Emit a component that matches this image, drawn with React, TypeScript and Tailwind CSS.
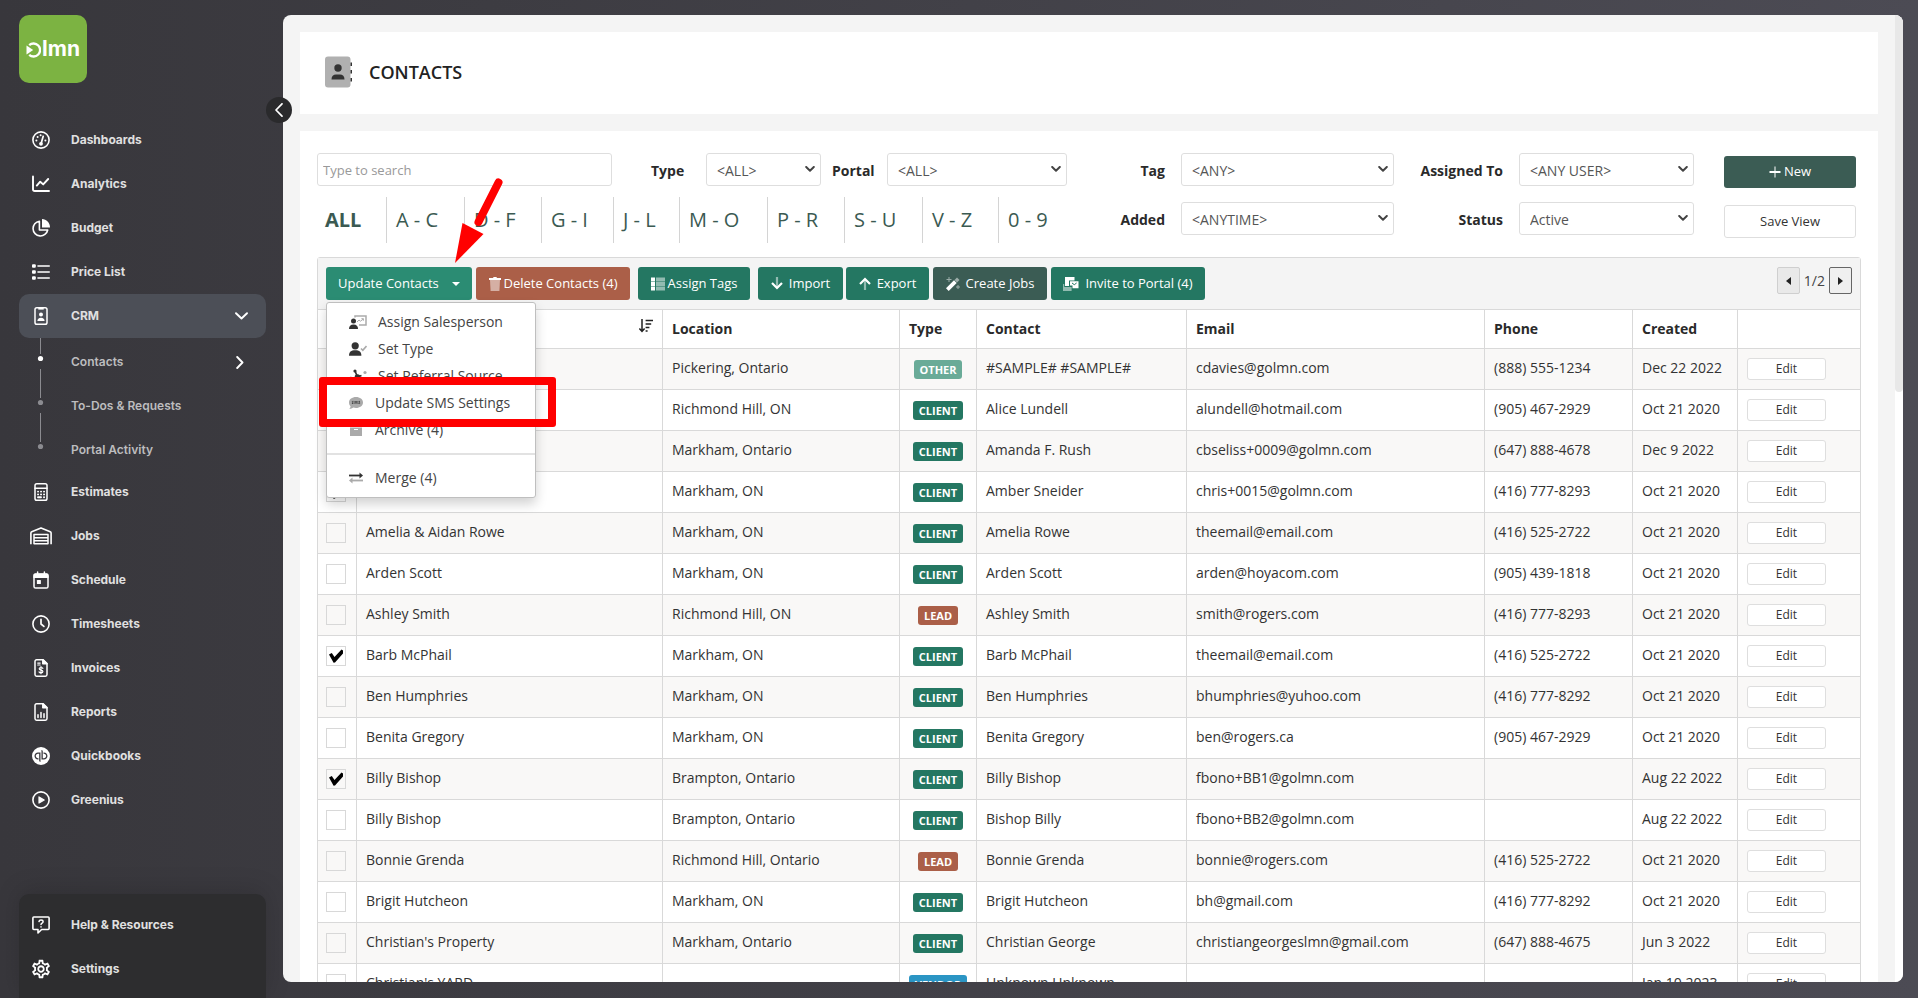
import React from "react";
import { SiQuickbooks } from "react-icons/si";
import { MdOutlineSettings } from "react-icons/md";

type IconProps = { children: React.ReactNode; className?: string; box?: string };

function Icon({ children, className = "size-[18px]", box = "0 0 18 18" }: IconProps) {
  return (
    <svg
      viewBox={box}
      className={className}
      fill="none"
      stroke="currentColor"
      strokeWidth="1.5"
      strokeLinecap="round"
      strokeLinejoin="round"
      aria-hidden="true"
    >
      {children}
    </svg>
  );
}

const solid = { fill: "currentColor", stroke: "none" };

const GaugeIcon = () => (
  <Icon>
    <circle cx="9" cy="9" r="8.1" strokeWidth="1.6" />
    <path d="M9 13 11.2 5.2" strokeWidth="1.7" />
    <circle cx="9" cy="12.8" r="1.9" {...solid} />
    <circle cx="4.4" cy="9.4" r="1" {...solid} />
    <circle cx="5.6" cy="5.9" r="1" {...solid} />
    <circle cx="8.6" cy="4.2" r="1" {...solid} />
    <circle cx="13.4" cy="9.4" r="1" {...solid} />
  </Icon>
);
const LineChartIcon = () => (
  <Icon>
    <path d="M1 1.5v12.7c0 1.1.6 1.8 1.8 1.8H17" strokeWidth="1.9" />
    <path d="m4.8 10.6 3.4-3.9 3 2.7 5-5.4" strokeWidth="1.9" />
  </Icon>
);
const PieIcon = () => (
  <Icon>
    <path d="M7.4 2.2A7.4 7.4 0 1 0 15.7 11H7.4z" strokeWidth="1.6" />
    <path d="M10 0c4.4.2 8 3.7 8 8.4H10z" {...solid} />
  </Icon>
);
const ListIcon = () => (
  <Icon>
    <path d="M6 3h11.2M6 9h11.2M6 15h11.2" strokeWidth="1.6" />
    <rect x="0" y="1.2" width="3.8" height="3.6" rx="1" {...solid} />
    <rect x="0" y="7.2" width="3.8" height="3.6" rx="1" {...solid} />
    <rect x="0" y="13.2" width="3.8" height="3.6" rx="1" {...solid} />
  </Icon>
);
const BadgeIcon = () => (
  <Icon>
    <rect x="3" y=".8" width="12" height="16.4" rx="1.8" strokeWidth="1.5" />
    <path d="M6.3 1h5.4v1.6H6.3z" {...solid} />
    <circle cx="9" cy="7.6" r="2" {...solid} />
    <path d="M5.4 14c0-2 1.3-3.3 3.6-3.3s3.6 1.3 3.6 3.3z" {...solid} />
  </Icon>
);
const CalculatorIcon = () => (
  <Icon>
    <rect x="3" y=".8" width="12" height="16.4" rx="1.8" strokeWidth="1.5" />
    <path d="M3 5.2h12" />
    <path d="M6 8.6h.1M9 8.6h.1M12 8.6h.1M6 11.4h.1M9 11.4h.1M12 11.4h.1M6 14.2h3M12 14.2h.1" strokeWidth="1.9" />
  </Icon>
);
const WarehouseIcon = () => (
  <Icon className="h-[18px] w-[22px]" box="0 0 22 18">
    <path d="M.9 17.3V5.9c0-.6.3-1 .8-1.2L11 .9l9.300 3.800c.5.200.8.6.8 1.200v11.400" strokeLinecap="butt" strokeWidth="1.6" />
    <path d="M4 17.3V7.6h14v9.700M4 10.7h14M4 13.7h14M4 16.7h14" strokeLinecap="butt" strokeWidth="1.5" />
  </Icon>
);
const CalendarIcon = () => (
  <Icon>
    <path d="M2 6.5V4a1.200 1.200 0 0 1 1.200-1.200h11.600A1.200 1.200 0 0 1 16 4v2.500z" fill="currentColor" strokeWidth="1.2" />
    <rect x="2" y="3.5" width="14" height="13.6" rx="1.6" />
    <path d="M5.6 2.600V.9M12.4 2.600V.9" />
    <rect x="4.900" y="9" width="4" height="4" rx=".6" {...solid} />
  </Icon>
);
const ClockIcon = () => (
  <Icon>
    <circle cx="9" cy="9" r="8.1" strokeWidth="1.6" />
    <path d="M9 4.3V9l2.900 2.400" strokeWidth="1.7" />
  </Icon>
);
const InvoiceIcon = () => (
  <Icon>
    <path d="M4.600.8h6.600L15 4.600v11a1.600 1.600 0 0 1-1.600 1.600H4.600A1.600 1.600 0 0 1 3 15.600V2.400A1.600 1.600 0 0 1 4.600.8z" />
    <path d="M10.800.8v4H15z" fill="currentColor" />
    <path d="M5.700 4.100h2.500M5.700 6h2.500" strokeWidth="1.1" />
    <path d="M10.900 9.300c-.4-.6-1.100-.8-1.900-.8-1 0-1.800.5-1.800 1.300 0 1.900 3.700.9 3.700 2.700 0 .8-.8 1.300-1.900 1.300-.9 0-1.600-.3-2-.9M9 7.600v7.100" strokeWidth="1.2" />
  </Icon>
);
const ReportIcon = () => (
  <Icon>
    <path d="M4.600.8h6.600L15 4.600v11a1.600 1.600 0 0 1-1.600 1.600H4.600A1.600 1.600 0 0 1 3 15.600V2.400A1.600 1.600 0 0 1 4.600.8z" />
    <path d="M10.800.8v4H15z" fill="currentColor" />
    <path d="M6 14.400v-2.600M9 14.400V9.400M12 14.400v-3.600" strokeWidth="1.5" />
  </Icon>
);
const PlayIcon = () => (
  <Icon>
    <circle cx="9" cy="9" r="8.1" strokeWidth="1.6" />
    <path d="M7 5.900v6.200L12.200 9z" fill="currentColor" strokeWidth="1.2" />
  </Icon>
);
const HelpIcon = () => (
  <Icon>
    <path d="M1.800 1h14.400c.6 0 .9.300.9.900v10.700c0 .6-.3.900-.9.900H9.600L6 17v-3.500H1.800c-.6 0-.9-.3-.9-.9V1.900c0-.6.3-.9.9-.9z" strokeWidth="1.6" />
    <path d="M7 5.500c.2-1 1-1.500 2-1.500 1.200 0 2.100.7 2.100 1.700 0 1.500-2.100 1.400-2.100 2.900M9 10.800v.1" strokeWidth="1.5" />
  </Icon>
);

const mainNav = [
  { label: "Dashboards", icon: <GaugeIcon /> },
  { label: "Analytics", icon: <LineChartIcon /> },
  { label: "Budget", icon: <PieIcon /> },
  { label: "Price List", icon: <ListIcon /> },
];
const lowerNav = [
  { label: "Estimates", icon: <CalculatorIcon /> },
  { label: "Jobs", icon: <WarehouseIcon /> },
  { label: "Schedule", icon: <CalendarIcon /> },
  { label: "Timesheets", icon: <ClockIcon /> },
  { label: "Invoices", icon: <InvoiceIcon /> },
  { label: "Reports", icon: <ReportIcon /> },
  { label: "Quickbooks", icon: <SiQuickbooks className="size-[18px]" /> },
  { label: "Greenius", icon: <PlayIcon /> },
];

function NavLink({ label, icon }: { label: string; icon: React.ReactNode }) {
  return (
    <a href="#" className="flex h-11 items-center">
      <span className="flex w-[43px] justify-center text-white">{icon}</span>
      <span className="ml-[9px] font-bold text-[#e0e0e0]">{label}</span>
    </a>
  );
}

function Sidebar() {
  return (
    <aside className="relative flex w-[283px] shrink-0 flex-col pt-[15px] pr-[17px] pl-[19px] font-['Inter','Lato',sans-serif] text-xs font-semibold">
      <a href="#" aria-label="LMN home" className="flex size-[68px] items-center justify-center gap-px rounded-[10px] bg-[#7cb342] text-white">
        <svg viewBox="0 0 15 16" className="mt-[2px] h-4 w-[15px]" fill="none" stroke="currentColor" aria-hidden="true">
          <path d="M3.200 3.200A6.500 6.500 0 1 1 3.200 12.800" strokeWidth="2.300" />
          <path d="M.5 3.500 7.200 8 .5 12.500z" fill="currentColor" stroke="none" />
        </svg>
        <span className="text-[21px] leading-6 font-bold">lmn</span>
      </a>

      <nav aria-label="Main" className="mt-[35px]">
        {mainNav.map((n) => (
          <NavLink key={n.label} {...n} />
        ))}
        <a href="#" className="flex h-11 items-center rounded-[10px] bg-[#4c4f57]">
          <span className="flex w-[43px] justify-center text-white">
            <BadgeIcon />
          </span>
          <span className="ml-[9px] font-bold text-[#e0e0e0]">CRM</span>
          <Icon className="mr-[18px] ml-auto h-2 w-[13px] text-white" box="0 0 13 8">
            <path d="m1 1.200 5.500 5.300L12 1.200" strokeWidth="1.9" />
          </Icon>
        </a>
        <div className="flex h-[132px]">
          <svg viewBox="0 0 43 132" className="h-[132px] w-[43px]" aria-hidden="true">
            <path d="M21.500 0v16M21.500 31v29M21.500 75v29" stroke="#8b8b90" strokeWidth="1" fill="none" />
            <circle cx="21.500" cy="20.500" r="2.600" fill="#fff" />
            <circle cx="21.500" cy="64.500" r="2.600" fill="#8b8b90" />
            <circle cx="21.500" cy="108.500" r="2.600" fill="#8b8b90" />
          </svg>
          <div className="ml-[9px] flex-1 pt-0.5 text-[#bdbdbf]">
            <a href="#" className="flex h-11 items-center justify-between">
              Contacts
              <Icon className="mr-[22px] h-[13px] w-2 text-white" box="0 0 8 13">
                <path d="M1.200 1 6.500 6.500 1.200 12" strokeWidth="1.9" />
              </Icon>
            </a>
            <a href="#" className="flex h-11 items-center">To-Dos &amp; Requests</a>
            <a href="#" className="flex h-11 items-center">Portal Activity</a>
          </div>
        </div>
        {lowerNav.map((n) => (
          <NavLink key={n.label} {...n} />
        ))}
      </nav>

      <div className="mt-auto h-[104px] rounded-t-[10px] bg-[#2d2d2f] pt-[9px] shadow-[0_-4px_24px_rgba(0,0,0,0.15)]">
        <NavLink label="Help & Resources" icon={<HelpIcon />} />
        <NavLink label="Settings" icon={<MdOutlineSettings className="size-[22px]" />} />
      </div>

      <button
        type="button"
        aria-label="Collapse menu"
        className="absolute top-[97px] right-[-9px] z-10 flex size-[26px] items-center justify-center rounded-full bg-[#2a2a2c] text-white"
      >
        <Icon className="h-[14px] w-[8px]" box="0 0 8 14">
          <path d="M7 .8 1 7l6 6.200" strokeWidth="1.7" />
        </Icon>
      </button>
    </aside>
  );
}

function Select({ id, value, className }: { id: string; value: string; className: string }) {
  return (
    <span className={`relative block ${className}`}>
      <select id={id} className="h-[33px] w-full appearance-none rounded-[3px] border border-[#dedede] bg-white px-[10px] pt-0.5 text-sm text-[#555]">
        <option>{value}</option>
      </select>
      <Icon className="pointer-events-none absolute top-[13px] right-[6px] h-[6px] w-[10px] text-[#444]" box="0 0 10 6">
        <path d="m1.200 1 3.800 3.700L8.800 1" strokeWidth="2" />
      </Icon>
    </span>
  );
}

function Field({ id, label, value, className, labelClass }: { id: string; label: string; value: string; className: string; labelClass: string }) {
  return (
    <div className="flex items-center">
      <label htmlFor={id} className={`pt-[3px] text-sm font-bold text-[#2a2a2a] ${labelClass}`}>
        {label}
      </label>
      <Select id={id} value={value} className={className} />
    </div>
  );
}

const letters = [
  ["ALL", "w-[69px] pl-2 font-bold"],
  ["A - C", "w-[78px] border-l pl-[9px]"],
  ["D - F", "w-[77px] border-l pl-[9px]"],
  ["G - I", "w-[72px] border-l pl-[9px]"],
  ["J - L", "w-[66px] border-l pl-[9px]"],
  ["M - O", "w-[88px] border-l pl-[9px]"],
  ["P - R", "w-[77px] border-l pl-[9px]"],
  ["S - U", "w-[78px] border-l pl-[9px]"],
  ["V - Z", "w-[76px] border-l pl-[9px]"],
  ["0 - 9", "w-[68px] border-l pl-[9px]"],
];

function Filters() {
  return (
    <div className="flex items-start">
      <div className="min-w-[750px] flex-1">
        <div className="flex items-center">
          <input
            type="text"
            aria-label="Search contacts"
            placeholder="Type to search"
            className="h-[33px] w-[295px] min-w-0 flex-1 rounded-[3px] border border-[#dedede] px-[5px] text-[13px] placeholder:text-[#999]"
          />
          <Field id="type" label="Type" value="<ALL>" labelClass="ml-[39px] w-[55px]" className="w-[115px]" />
          <Field id="portal" label="Portal" value="<ALL>" labelClass="ml-[11px] w-[55px]" className="w-[180px]" />
        </div>
        <div className="mt-[11px] flex">
          {letters.map(([text, cls]) => (
            <a key={text} href="#" className={`flex h-[46px] items-center border-[#d4d4d4] text-xl whitespace-nowrap text-[#3b5a52] ${cls}`}>
              {text}
            </a>
          ))}
        </div>
      </div>
      <div className="flex flex-col gap-4">
        <Field id="tag" label="Tag" value="<ANY>" labelClass="mr-[16px] w-[98px] text-right" className="w-[213px]" />
        <Field id="added" label="Added" value="<ANYTIME>" labelClass="mr-[16px] w-[98px] text-right" className="w-[213px]" />
      </div>
      <div className="flex flex-col gap-4">
        <Field id="assigned" label="Assigned To" value="<ANY USER>" labelClass="mr-[16px] w-[109px] text-right" className="w-[175px]" />
        <Field id="status" label="Status" value="Active" labelClass="mr-[16px] w-[109px] text-right" className="w-[175px]" />
      </div>
      <div className="mr-[5px] ml-[30px] flex w-[132px] flex-col gap-[17px] pt-[3px] text-[13px]">
        <button type="button" className="flex h-8 items-center justify-center gap-[3px] rounded-[3px] bg-[#3b5c54] text-white">
          <svg viewBox="0 0 12 12" className="size-3" aria-hidden="true">
            <path d="M6 .5v11" stroke="#fff" strokeWidth="2" opacity=".5" />
            <path d="M.5 6h11" stroke="#fff" strokeWidth="2" />
          </svg>
          New
        </button>
        <button type="button" className="h-[33px] rounded-[3px] border border-[#dedede] bg-white text-[#333]">
          Save View
        </button>
      </div>
    </div>
  );
}

const menuItems = [
  {
    label: "Assign Salesperson",
    gap: "ml-[11px]",
    icon: (
      <svg viewBox="0 0 18 16" className="h-4 w-[18px]" aria-hidden="true">
        <path d="M6 3.500V2h11v9h-7" fill="none" stroke="#aaa" strokeWidth="1.5" />
        <path d="m8 8 2-2 1.500 1.200L14.300 5M12.400 4.700h2v2" fill="none" stroke="#aaa" />
        <circle cx="4.500" cy="7" r="2.500" fill="#333" />
        <path d="M0 15c0-3 1.500-4.500 4.500-4.500S9 12 9 15z" fill="#333" />
      </svg>
    ),
  },
  {
    label: "Set Type",
    gap: "ml-[11px]",
    icon: (
      <svg viewBox="0 0 18 16" className="h-4 w-[18px]" aria-hidden="true">
        <circle cx="6.200" cy="4.800" r="3.600" fill="#333" />
        <path d="M0 14.800C0 11 2 9.300 6.200 9.300s6.200 1.700 6.200 5.500z" fill="#333" />
        <path d="m12 7.500 1.800 1.800L17.500 5" fill="none" stroke="#aaa" strokeWidth="1.6" />
      </svg>
    ),
  },
  {
    label: "Set Referral Source",
    gap: "ml-[11px]",
    icon: (
      <svg viewBox="0 0 18 16" className="h-4 w-[18px]" aria-hidden="true">
        <circle cx="8.500" cy="9" r="2.800" fill="#333" />
        <path d="M6 3 8.500 9l4-1.500M8.500 9l3.500 5" fill="none" stroke="#333" strokeWidth="1.7" />
        <circle cx="6" cy="3" r="1.600" fill="#333" />
        <circle cx="16" cy="4.500" r="1.600" fill="#aaa" />
        <circle cx="1.800" cy="10" r="1.600" fill="#aaa" />
      </svg>
    ),
  },
  {
    label: "Update SMS Settings",
    gap: "ml-[12px]",
    icon: (
      <svg viewBox="0 0 14 14" className="size-[14px]" aria-hidden="true">
        <path d="M7 1c3.900 0 7 2.300 7 5.500S10.900 12 7 12c-1 0-1.900-.1-2.700-.4C3.300 12.400 1.900 13 .3 13c.7-.8 1.200-1.700 1.300-2.600C.6 9.400 0 8 0 6.500 0 3.300 3.100 1 7 1z" fill="#aaa" />
        <path d="M4.500 5.400c-1.700-.4-1.700 1-.7 1.100 1 .2.800 1.500-.9 1M6 8V5.200l1 1.300 1-1.300V8M11 5.400c-1.700-.4-1.700 1-.7 1.100 1 .2.800 1.500-.9 1" fill="none" stroke="#333" strokeWidth=".8" />
      </svg>
    ),
  },
  {
    label: "Archive (4)",
    gap: "ml-[12px]",
    icon: (
      <svg viewBox="0 0 14 14" className="size-[14px]" aria-hidden="true">
        <rect x="0" y="1" width="14" height="3" fill="#333" />
        <path d="M1 4.500h12V13H1z" fill="#aaa" />
        <path d="M5 6.500h4" stroke="#fff" />
      </svg>
    ),
  },
];

function UpdateMenu() {
  return (
    <div className="relative">
      <button type="button" aria-expanded="true" className="flex h-[33px] w-[146px] items-center justify-between rounded-[3px] bg-[#2b8c73] pr-[12px] pl-3 text-white">
        Update Contacts
        <svg viewBox="0 0 8 4" className="h-1 w-2" aria-hidden="true">
          <path d="M0 0h8L4 4z" fill="#fff" />
        </svg>
      </button>
      <div
        role="menu"
        className="absolute top-[35px] left-0 z-10 h-[196px] w-[210px] rounded-[3px] border border-[#bfbfbf] bg-white pt-[5px] text-sm text-[#444] shadow-[0_6px_12px_rgba(0,0,0,0.18)]"
      >
        {menuItems.map((m) => (
          <button key={m.label} type="button" role="menuitem" className="flex h-[27px] w-full items-center pl-[22px]">
            {m.icon}
            <span className={m.gap}>{m.label}</span>
          </button>
        ))}
        <hr className="mt-[10px] mb-[9px] border-t-2 border-[#e2e2e2]" />
        <button type="button" role="menuitem" className="flex h-[27px] w-full items-center pl-[22px]">
          <svg viewBox="0 0 14 14" className="size-[14px]" aria-hidden="true">
            <path d="M0 4.500h11" stroke="#333" strokeWidth="1.8" />
            <path d="M10.500 1.500 14 4.500l-3.500 3z" fill="#333" />
            <path d="M3 9.500h11" stroke="#aaa" strokeWidth="1.8" />
            <path d="M3.500 6.500 0 9.500l3.500 3z" fill="#aaa" />
          </svg>
          <span className="ml-[12px]">Merge (4)</span>
        </button>
      </div>
      <div className="pointer-events-none absolute top-[110px] -left-[7px] z-20 h-[50px] w-[237px] rounded-[3px] border-8 border-[#ff0000]" />
      <svg viewBox="0 0 60 90" className="pointer-events-none absolute -top-[92px] left-[122px] z-20 h-[90px] w-[60px]" aria-hidden="true">
        <path d="M50.500 7.500 30.500 47" stroke="#ff0000" strokeWidth="8" strokeLinecap="round" />
        <path d="M7 88 14.500 48 35.500 59z" fill="#ff0000" />
      </svg>
    </div>
  );
}

const toolButton = "flex h-[33px] items-center rounded-[3px] text-white whitespace-nowrap";

function Toolbar() {
  return (
    <div className="flex h-[51px] items-center bg-[#f4f4f4] pl-2 text-[13px]">
      <UpdateMenu />
      <button type="button" className={`${toolButton} ml-1 w-[154px] justify-center gap-[3px] bg-[#ab5f48]`}>
        <svg viewBox="0 0 12 14" className="h-[14px] w-3" aria-hidden="true">
          <path d="M0 1h4l.6-1h2.800L8 1h4v2H0z" fill="#fff" />
          <path d="M1 3h10L10.400 14H1.600z" fill="#fff" opacity=".5" />
        </svg>
        Delete Contacts (4)
      </button>
      <button type="button" className={`${toolButton} ml-2 w-[112px] justify-center gap-[3px] bg-[#247762]`}>
        <svg viewBox="0 0 14 14" className="size-[14px]" aria-hidden="true">
          <path d="M0 .5h4v4H0zM0 5h4v4H0zM0 9.500h4v4H0z" fill="#fff" />
          <path d="M5 .5h9v4H5zM5 5h9v4H5zM5 9.500h9v4H5z" fill="#fff" opacity=".5" />
        </svg>
        Assign Tags
      </button>
      <button type="button" className={`${toolButton} ml-2 w-[85px] justify-center gap-[6px] bg-[#247762]`}>
        <svg viewBox="0 0 12 13" className="h-[13px] w-3" fill="none" stroke="#fff" strokeWidth="2.200" aria-hidden="true">
          <path d="M6 0v11" opacity=".5" />
          <path d="m1 6 5 5 5-5" />
        </svg>
        Import
      </button>
      <button type="button" className={`${toolButton} ml-[3px] w-[83px] justify-center gap-[6px] bg-[#247762]`}>
        <svg viewBox="0 0 12 13" className="h-[13px] w-3" fill="none" stroke="#fff" strokeWidth="2.200" aria-hidden="true">
          <path d="M6 13V2" opacity=".5" />
          <path d="m1 7 5-5 5 5" />
        </svg>
        Export
      </button>
      <button type="button" className={`${toolButton} ml-1 w-[114px] justify-center gap-[6px] bg-[#3b5c54]`}>
        <svg viewBox="0 0 14 14" className="size-[14px]" aria-hidden="true">
          <path d="m0 11.300 8-8L10.700 6l-8 8z" fill="#fff" />
          <path d="m8.500 3 2.500-2.500L13.500 3 11 5.500z" fill="#fff" opacity=".5" />
          <path d="M3 0v5M.5 2.500h5M12 8v4M10 10h4" stroke="#fff" opacity=".5" />
        </svg>
        Create Jobs
      </button>
      <button type="button" className={`${toolButton} ml-1 w-[154px] justify-center gap-[6px] bg-[#247762]`}>
        <svg viewBox="0 0 16 14" className="h-[14px] w-4" aria-hidden="true">
          <path d="M2 0h9.500v3.500H6V9H2z" fill="#fff" />
          <path d="M7 4.200h8.500v7H9.500V8.500H7z" fill="#fff" />
          <path d="m9 6 2.300 1.700L13.600 6" stroke="#247762" fill="none" />
          <path d="M0 7h1.200v3H8.600v4H0z" fill="#fff" opacity=".5" />
        </svg>
        Invite to Portal (4)
      </button>
      <div className="mr-2 mb-[6px] ml-auto flex items-center gap-[4px] text-sm text-[#444]">
        <button type="button" aria-label="Previous page" className="flex h-[27px] w-[23px] items-center justify-center rounded-[2px] border border-[#cfcfcf] bg-[#e9e9e9]">
          <svg viewBox="0 0 5 8" className="h-2 w-[5px]" aria-hidden="true">
            <path d="M5 0v8L0 4z" fill="#222" />
          </svg>
        </button>
        <span>1/2</span>
        <button type="button" aria-label="Next page" className="flex h-[27px] w-[23px] items-center justify-center rounded-[2px] border border-[#666] bg-[#efefef]">
          <svg viewBox="0 0 5 8" className="h-2 w-[5px]" aria-hidden="true">
            <path d="M0 0v8l5-4z" fill="#222" />
          </svg>
        </button>
      </div>
    </div>
  );
}

type Row = [string, string, string, string, string, string, string, boolean];
const rows: Row[] = [
  ["#SAMPLE# #SAMPLE#", "Pickering, Ontario", "OTHER", "#SAMPLE# #SAMPLE#", "cdavies@golmn.com", "(888) 555-1234", "Dec 22 2022", false],
  ["Alice Lundell", "Richmond Hill, ON", "CLIENT", "Alice Lundell", "alundell@hotmail.com", "(905) 467-2929", "Oct 21 2020", false],
  ["Amanda F. Rush", "Markham, Ontario", "CLIENT", "Amanda F. Rush", "cbseliss+0009@golmn.com", "(647) 888-4678", "Dec 9 2022", true],
  ["Amber Sneider", "Markham, ON", "CLIENT", "Amber Sneider", "chris+0015@golmn.com", "(416) 777-8293", "Oct 21 2020", true],
  ["Amelia & Aidan Rowe", "Markham, ON", "CLIENT", "Amelia Rowe", "theemail@email.com", "(416) 525-2722", "Oct 21 2020", false],
  ["Arden Scott", "Markham, ON", "CLIENT", "Arden Scott", "arden@hoyacom.com", "(905) 439-1818", "Oct 21 2020", false],
  ["Ashley Smith", "Richmond Hill, ON", "LEAD", "Ashley Smith", "smith@rogers.com", "(416) 777-8293", "Oct 21 2020", false],
  ["Barb McPhail", "Markham, ON", "CLIENT", "Barb McPhail", "theemail@email.com", "(416) 525-2722", "Oct 21 2020", true],
  ["Ben Humphries", "Markham, ON", "CLIENT", "Ben Humphries", "bhumphries@yuhoo.com", "(416) 777-8292", "Oct 21 2020", false],
  ["Benita Gregory", "Markham, ON", "CLIENT", "Benita Gregory", "ben@rogers.ca", "(905) 467-2929", "Oct 21 2020", false],
  ["Billy Bishop", "Brampton, Ontario", "CLIENT", "Billy Bishop", "fbono+BB1@golmn.com", "", "Aug 22 2022", true],
  ["Billy Bishop", "Brampton, Ontario", "CLIENT", "Bishop Billy", "fbono+BB2@golmn.com", "", "Aug 22 2022", false],
  ["Bonnie Grenda", "Richmond Hill, Ontario", "LEAD", "Bonnie Grenda", "bonnie@rogers.com", "(416) 525-2722", "Oct 21 2020", false],
  ["Brigit Hutcheon", "Markham, ON", "CLIENT", "Brigit Hutcheon", "bh@gmail.com", "(416) 777-8292", "Oct 21 2020", false],
  ["Christian's Property", "Markham, Ontario", "CLIENT", "Christian George", "christiangeorgeslmn@gmail.com", "(647) 888-4675", "Jun 3 2022", false],
  ["Christian's YARD", "", "VENDOR", "Unknown Unknown", "", "", "Jan 10 2023", false],
];

const badgeColor: Record<string, string> = {
  OTHER: "bg-[#6aab98]",
  CLIENT: "bg-[#247762]",
  LEAD: "bg-[#ab5f48]",
  VENDOR: "bg-[#2b95c4]",
};

function Check({ label, checked }: { label: string; checked: boolean }) {
  return (
    <span className="relative ml-2 block size-5">
      <input type="checkbox" aria-label={label} defaultChecked={checked} className="peer block size-5 appearance-none border border-[#d8d8d8]" />
      <svg viewBox="0 0 14 14" className="pointer-events-none absolute top-[3px] left-[3px] hidden size-[14px] peer-checked:block" aria-hidden="true">
        <path d="M0 5.500 2.800 4l2.700 4L12.500.5 14 1.500v3L6 13.500 4.600 13.700z" fill="#000" />
      </svg>
    </span>
  );
}

const cell = "border-t border-l border-[#d9d9d9] pl-[9px] text-left whitespace-nowrap";

function ContactsTable() {
  return (
    <table className="w-full table-fixed border-separate border-spacing-0 text-sm text-[#333]">
      <colgroup>
        <col className="w-[38px]" />
        <col className="w-[306px]" />
        <col className="w-[237px]" />
        <col className="w-[77px]" />
        <col className="w-[210px]" />
        <col />
        <col className="w-[148px]" />
        <col className="w-[105px]" />
        <col className="w-[123px]" />
      </colgroup>
      <thead>
        <tr className="h-[39px] text-[#2a2a2a]">
          <th className="border-t border-[#d9d9d9] p-0">
            <Check label="Select all" checked={false} />
          </th>
          <th className={cell}>
            <button type="button" aria-label="Sort by name" className="mr-[9px] mb-[6px] ml-auto block">
              <svg viewBox="0 0 14 14" className="size-[14px]" fill="none" stroke="#222" strokeWidth="1.5" aria-hidden="true">
                <path d="M3 0v12M.4 9.500 3 12.400l2.600-2.900M6.600 1.500H14M6.600 5h5.600M6.600 8.500h3.800M6.600 12h2" />
              </svg>
            </button>
          </th>
          {["Location", "Type", "Contact", "Email", "Phone", "Created"].map((h) => (
            <th key={h} scope="col" className={`${cell} font-bold`}>
              {h}
            </th>
          ))}
          <th className={cell}></th>
        </tr>
      </thead>
      <tbody>
        {rows.map(([name, location, type, contact, email, phone, created, checked], i) => (
          <tr key={i} className="h-[41px] odd:bg-[#f9f8f7]">
            <td className="border-t border-[#d9d9d9] p-0">
              <Check label={`Select ${name}`} checked={checked} />
            </td>
            <td className={`${cell} pb-[3px]`}>{name}</td>
            <td className={`${cell} pb-[3px]`}>{location}</td>
            <td className="border-t border-l border-[#d9d9d9] p-0">
              <span className={`mx-auto block h-[19px] w-fit rounded-[3px] px-[6px] text-[11px] leading-[19px] font-bold text-white ${badgeColor[type]}`}>{type}</span>
            </td>
            <td className={`${cell} pb-[3px]`}>{contact}</td>
            <td className={`${cell} pb-[3px]`}>{email}</td>
            <td className={`${cell} pb-[3px]`}>{phone}</td>
            <td className={`${cell} pb-[3px]`}>{created}</td>
            <td className={cell}>
              <button type="button" className="block h-[22px] w-[79px] rounded-[3px] border border-[#dedede] bg-white text-xs text-[#333]">
                Edit
              </button>
            </td>
          </tr>
        ))}
      </tbody>
    </table>
  );
}

export default function App() {
  return (
    <div className="flex h-screen overflow-hidden bg-linear-to-r from-[#38373c] to-[#4c4b54] font-['Open_Sans','Noto_Sans',sans-serif]">
      <Sidebar />
      <main className="mt-[15px] mr-[15px] mb-4 flex min-w-0 flex-1 overflow-hidden rounded-lg bg-[#f4f4f4]">
        <div className="min-w-0 flex-1 overflow-hidden pt-[17px] pr-[17px] pl-[17px]">
          <header className="flex h-[82px] items-center bg-white pb-[3px] pl-[25px]">
            <svg viewBox="0 0 28 32" className="h-8 w-7" aria-hidden="true">
              <rect x="0" y="0.500" width="25.500" height="31" rx="3" fill="#b0b0b0" />
              <path d="M25.500 6.500H27V10h-1.500zM25.500 14H27v3.500h-1.500zM25.500 22H27v3.500h-1.500z" fill="#333" />
              <circle cx="13" cy="12" r="3.700" fill="#333" />
              <path d="M6.500 23.500c0-3.500 1.800-5 4.500-5h4c2.700 0 4.500 1.500 4.500 5z" fill="#333" />
            </svg>
            <h1 className="ml-4 text-lg font-semibold text-[#222]">CONTACTS</h1>
          </header>
          <section className="mt-[17px] bg-white px-[17px] pt-[22px]">
            <Filters />
            <div className="mt-[14px] rounded-t-[3px] border border-[#d9d9d9]">
              <Toolbar />
              <ContactsTable />
            </div>
          </section>
        </div>
        <div className="w-2 shrink-0 bg-white" aria-hidden="true">
          <div className="h-[39%] rounded-b-full bg-[#e8e8e8]" />
        </div>
      </main>
    </div>
  );
}
